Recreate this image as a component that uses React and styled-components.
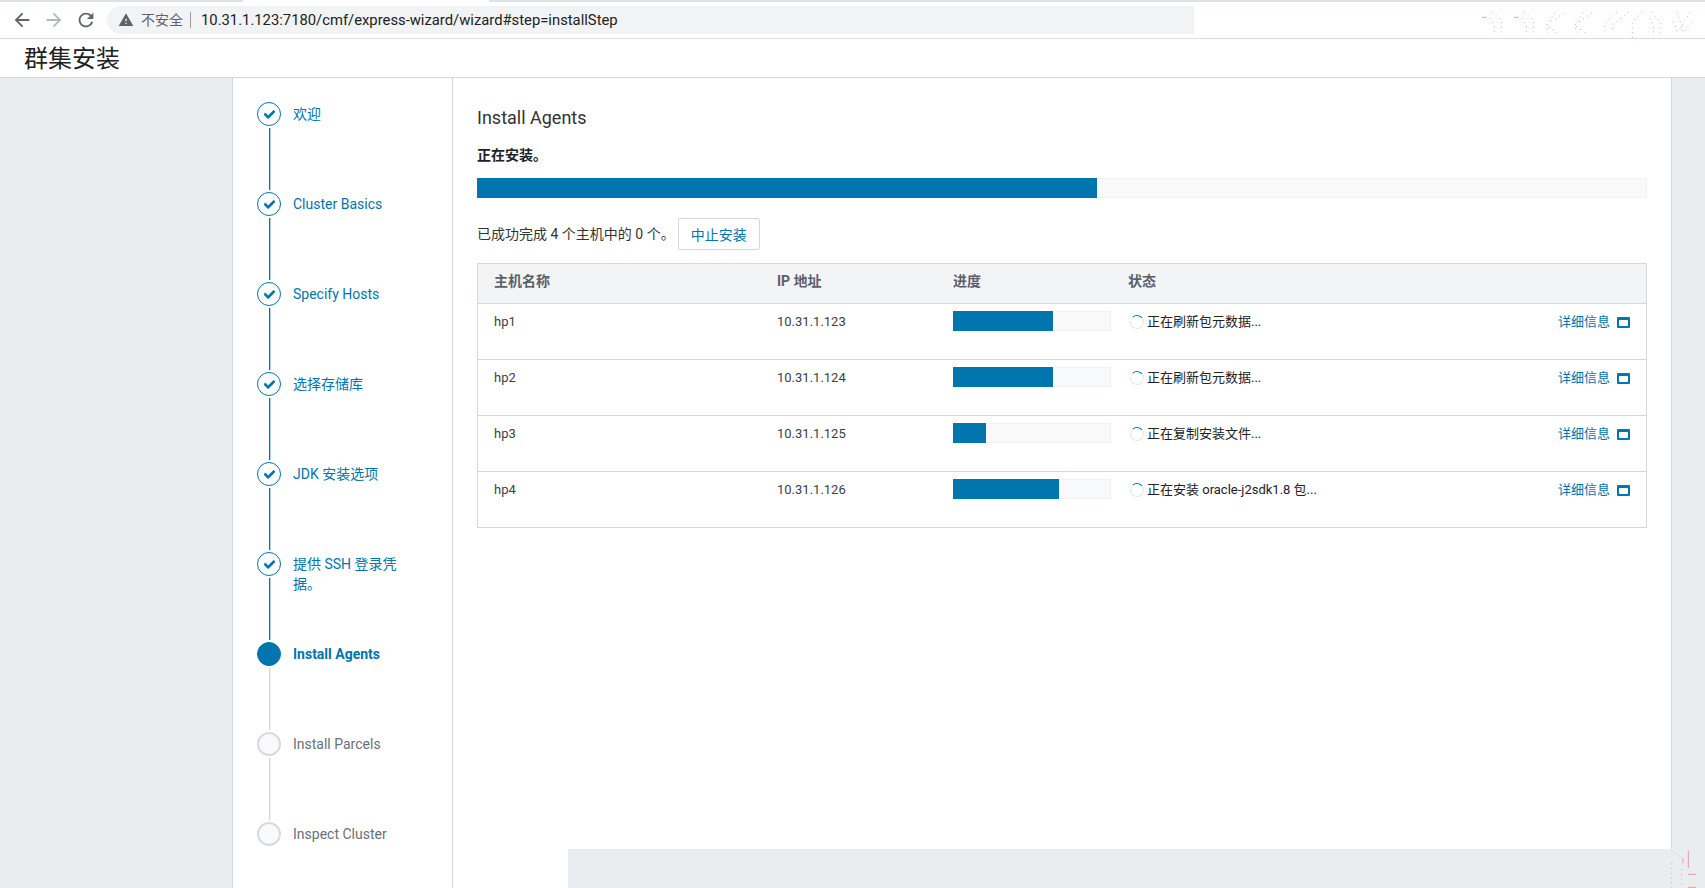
import { FaCheck } from "react-icons/fa";
import styled, { createGlobalStyle } from "styled-components";

const BLUE = "#0075ae";
const FONT = `Roboto, "Noto Sans CJK SC", sans-serif`;

const GlobalStyle = createGlobalStyle`
  html, body {
    margin: 0;
    padding: 0;
    height: 100%;
    overflow: hidden;
  }
  body {
    font-family: ${FONT};
    font-size: 14px;
    color: #333;
    background: #eaedf0;
  }
`;

const Page = styled.div`
  position: relative;
  display: flex;
  flex-direction: column;
  height: 888px;
  overflow: hidden;
`;

/* browser chrome */
const TabStrip = styled.div`
  flex: none;
  height: 2px;
  background: linear-gradient(
    to right,
    #dee1e6 243px,
    #fff 243px,
    #fff 489px,
    #dee1e6 489px
  );
`;

const Toolbar = styled.div`
  flex: none;
  display: flex;
  align-items: center;
  height: 36px;
  padding: 0 511px 0 11px;
  background: #fff;
  border-bottom: 1px solid #dadce0;
`;

const NavButton = styled.svg`
  flex: none;
  width: 22px;
  height: 22px;
  margin-right: 10px;
  margin-top: -1px;
  fill: ${(props) => (props.$disabled ? "#b5b8bb" : "#5f6368")};
`;

const AddressBar = styled.div`
  flex: 1;
  display: flex;
  align-items: center;
  height: 28px;
  padding-left: 11px;
  background: #f1f3f4;
  border-radius: 14px 0 0 14px;
  white-space: nowrap;
`;

const WarnIcon = styled.svg`
  width: 16px;
  height: 16px;
  margin-right: 7px;
  fill: #5f6368;
`;

const Insecure = styled.span`
  color: #5f6368;
  font-size: 14px;
  padding-right: 7px;
  border-right: 1px solid #9aa0a6;
  line-height: 16px;
`;

const Url = styled.span`
  margin-left: 10px;
  font-size: 14.8px;
  color: #202124;
`;

const PageHeader = styled.header`
  flex: none;
  display: flex;
  align-items: center;
  height: 34px;
  padding: 0 0 4px 24px;
  background: #fff;
  border-bottom: 1px solid #d6d8da;
`;

const PageTitle = styled.h1`
  margin: 0;
  font-size: 24px;
  font-weight: 400;
  color: #222;
`;

const Body = styled.div`
  flex: 1;
  min-height: 0;
  display: flex;
  padding: 0 33px 0 232px;
`;

/* wizard steps */
const Sidebar = styled.nav`
  flex: none;
  box-sizing: border-box;
  width: 221px;
  padding: 24px 0 0 24px;
  background: #fff;
  border-left: 1px solid #d6d8da;
  border-right: 1px solid #d6d8da;
`;

const Step = styled.div`
  display: flex;
  height: 90px;
`;

const Marker = styled.div`
  flex: none;
  display: flex;
  flex-direction: column;
  align-items: center;
  width: 24px;
`;

const Circle = styled.div`
  flex: none;
  box-sizing: border-box;
  display: flex;
  align-items: center;
  justify-content: center;
  width: 24px;
  height: 24px;
  border-radius: 50%;
  color: ${BLUE};
  border: ${(props) =>
    props.$state === "pending" ? "2px solid #d8dadd" : `1.5px solid ${BLUE}`};
  background: ${(props) =>
    props.$state === "current"
      ? BLUE
      : props.$state === "pending"
        ? "#f8f9fb"
        : "#fff"};

  svg {
    stroke: currentColor;
    stroke-width: 30px;
  }
`;

const Connector = styled.div`
  flex: 1;
  width: 1px;
  margin: 2px 0;
  background: ${(props) => (props.$done ? BLUE : "#d3d5d8")};
  box-shadow: 1px 0 0 ${(props) => (props.$done ? "#0075ae55" : "#d3d5d855")};
`;

const StepLabel = styled.div`
  width: 112px;
  margin: 2px 0 0 12px;
  line-height: 20px;
  font-size: 14px;
  font-weight: ${(props) => (props.$state === "current" ? 700 : 400)};
  color: ${(props) => (props.$state === "pending" ? "#6a6f78" : BLUE)};
`;

/* main panel */
const Main = styled.main`
  flex: 1;
  min-width: 0;
  display: flex;
  flex-direction: column;
  background: #fff;
  border-right: 1px solid #d6d8da;
`;

const Content = styled.div`
  flex: 1;
  min-height: 0;
  padding: 28px 24px 0 24px;
`;

const Footer = styled.div`
  flex: none;
  height: 39px;
  margin-left: 115px;
  margin-right: -1px;
  background: #eaedf0;
`;

const Heading = styled.h2`
  margin: 0;
  font-size: 18px;
  font-weight: 400;
  line-height: 24px;
  color: #333;
`;

const Status = styled.div`
  margin-top: 15px;
  font-size: 14px;
  font-weight: 700;
  line-height: 20px;
  color: #222;
`;

const Track = styled.div`
  height: 20px;
  background: #f8f9fa;
  box-shadow: inset 0 0 0 1px #f1f2f4;
`;

const OverallTrack = styled(Track)`
  margin-top: 13px;
`;

const Fill = styled.div`
  height: 100%;
  background: ${BLUE};
`;

const SummaryRow = styled.div`
  display: flex;
  align-items: center;
  gap: 3px;
  margin-top: 20px;
  font-size: 14px;
`;

const SummaryText = styled.span`
  margin-top: -2px;
`;

const AbortButton = styled.button`
  box-sizing: border-box;
  width: 82px;
  height: 32px;
  padding: 0;
  background: #fff;
  border: 1px solid #d6d8da;
  border-radius: 2px;
  color: ${BLUE};
  font: inherit;
  cursor: pointer;
`;

const HostTable = styled.div`
  margin-top: 13px;
  border: 1px solid #d6d8da;
  border-bottom: 0;
`;

const Row = styled.div`
  display: grid;
  grid-template-columns: 283px 176px 175px 1fr;
  box-sizing: border-box;
  height: ${(props) => (props.$head ? "40px" : "56px")};
  border-bottom: 1px solid #d6d8da;
  background: ${(props) => (props.$head ? "#f3f4f6" : "#fff")};
  font-size: 13px;
`;

const HeadCell = styled.div`
  padding: 0 16px;
  line-height: 35px;
  font-size: 14px;
  font-weight: 700;
  color: #5b6068;
`;

const Cell = styled.div`
  padding: 8px 16px 0;
  line-height: 20px;
  color: #3a3f45;
`;

const BarCell = styled.div`
  padding: 7px 1px 0 16px;
`;

const StatusCell = styled(Cell)`
  display: flex;
  justify-content: space-between;
  padding-right: 16px;
  color: #222;
`;

const StatusText = styled.span`
  display: flex;
  align-items: center;
  height: 20px;
  gap: 3px;
  font-size: 13px;
`;

const Spinner = styled.span`
  flex: none;
  box-sizing: border-box;
  width: 14px;
  height: 14px;
  margin-left: 2px;
  border: 1.5px solid #e3e6ea;
  border-top-color: ${BLUE};
  border-radius: 50%;
  transform: rotate(5deg);
`;

const DetailsLink = styled.a`
  display: flex;
  align-items: center;
  gap: 7px;
  height: 20px;
  margin-left: -1px;
  color: ${BLUE};
  font-size: 13px;
  text-decoration: none;
  cursor: pointer;
`;

const WindowIcon = styled.span`
  box-sizing: border-box;
  width: 13px;
  height: 11px;
  border: 2px solid ${BLUE};
  border-top-width: 3px;
  border-radius: 1px;
`;

/* faint artefacts in the screen capture */
const Noise = styled.svg`
  position: absolute;
  pointer-events: none;
  fill: none;
  stroke: #e48f8f;
  stroke-width: 2.5;
  stroke-dasharray: 3 11;
  ${(props) => (props.$corner === "top" ? "top: 0;" : "bottom: 0;")}
  right: 0;
`;

const steps = [
  { label: "欢迎", state: "done" },
  { label: "Cluster Basics", state: "done" },
  { label: "Specify Hosts", state: "done" },
  { label: "选择存储库", state: "done" },
  { label: "JDK 安装选项", state: "done" },
  { label: "提供 SSH 登录凭据。", state: "done" },
  { label: "Install Agents", state: "current" },
  { label: "Install Parcels", state: "pending" },
  { label: "Inspect Cluster", state: "pending" },
];

const hosts = [
  { name: "hp1", ip: "10.31.1.123", progress: 63, status: "正在刷新包元数据..." },
  { name: "hp2", ip: "10.31.1.124", progress: 63, status: "正在刷新包元数据..." },
  { name: "hp3", ip: "10.31.1.125", progress: 21, status: "正在复制安装文件..." },
  { name: "hp4", ip: "10.31.1.126", progress: 67, status: "正在安装 oracle-j2sdk1.8 包..." },
];

const App = () => {
  return (
    <Page>
      <GlobalStyle />
      <TabStrip />
      <Toolbar>
        <NavButton viewBox="0 0 24 24">
          <path d="M20 11H7.83l5.59-5.59L12 4l-8 8 8 8 1.41-1.41L7.83 13H20v-2z" />
        </NavButton>
        <NavButton viewBox="0 0 24 24" $disabled>
          <path d="M12 4l-1.41 1.41L16.17 11H4v2h12.17l-5.58 5.59L12 20l8-8z" />
        </NavButton>
        <NavButton viewBox="0 0 24 24">
          <path d="M17.65 6.35A7.958 7.958 0 0 0 12 4c-4.42 0-7.99 3.58-7.99 8s3.57 8 7.99 8c3.73 0 6.84-2.55 7.73-6h-2.08A5.99 5.99 0 0 1 12 18c-3.31 0-6-2.69-6-6s2.69-6 6-6c1.66 0 3.14.69 4.22 1.78L13 11h7V4l-2.35 2.35z" />
        </NavButton>
        <AddressBar>
          <WarnIcon viewBox="0 0 24 24">
            <path d="M1 21h22L12 2 1 21zm12-3h-2v-2h2v2zm0-4h-2v-4h2v4z" />
          </WarnIcon>
          <Insecure>不安全</Insecure>
          <Url>10.31.1.123:7180/cmf/express-wizard/wizard#step=installStep</Url>
        </AddressBar>
      </Toolbar>
      <PageHeader>
        <PageTitle>群集安装</PageTitle>
      </PageHeader>
      <Body>
        <Sidebar>
          {steps.map((step, index) => (
            <Step key={step.label}>
              <Marker>
                <Circle $state={step.state}>
                  {step.state === "done" && <FaCheck size={11} />}
                </Circle>
                {index < steps.length - 1 && (
                  <Connector $done={step.state === "done"} />
                )}
              </Marker>
              <StepLabel $state={step.state}>{step.label}</StepLabel>
            </Step>
          ))}
        </Sidebar>
        <Main>
          <Content>
            <Heading>Install Agents</Heading>
            <Status>正在安装。</Status>
            <OverallTrack>
              <Fill style={{ width: "53%" }} />
            </OverallTrack>
            <SummaryRow>
              <SummaryText>已成功完成 4 个主机中的 0 个。</SummaryText>
              <AbortButton>中止安装</AbortButton>
            </SummaryRow>
            <HostTable>
              <Row $head>
                <HeadCell>主机名称</HeadCell>
                <HeadCell>IP 地址</HeadCell>
                <HeadCell>进度</HeadCell>
                <HeadCell>状态</HeadCell>
              </Row>
              {hosts.map((host) => (
                <Row key={host.name}>
                  <Cell>{host.name}</Cell>
                  <Cell>{host.ip}</Cell>
                  <BarCell>
                    <Track>
                      <Fill style={{ width: `${host.progress}%` }} />
                    </Track>
                  </BarCell>
                  <StatusCell>
                    <StatusText>
                      <Spinner />
                      {host.status}
                    </StatusText>
                    <DetailsLink>
                      详细信息
                      <WindowIcon />
                    </DetailsLink>
                  </StatusCell>
                </Row>
              ))}
            </HostTable>
          </Content>
          <Footer />
        </Main>
      </Body>
      <Noise $corner="top" width="405" height="120" viewBox="0 0 1215 360">
        <path d="M577 37L604 60V97M570 55L583 75V97M673 37L700 60V97M665 55L679 75V97" />
        <path d="M790 40L740 75L772 100M765 38L738 78L748 100M875 40L823 75L857 100M850 38L823 78L832 100" />
        <path d="M950 37L915 68V100M985 37L937 75V97M1025 37L997 68V115M1055 37L1082 70V100M1050 55L1060 75V100" />
        <path d="M1132 37L1150 98L1180 65M1170 37L1135 95M1120 65L1133 100" />
        <path d="M546 52H561M642 52H657" strokeDasharray="none" />
      </Noise>
      <Noise $corner="bottom" width="205" height="108" viewBox="0 0 615 324">
        <path d="M515 213L549 235M515 250V324M545 268V320" />
        <path d="M565 212V265M564 283H588M564 322H588M549 235V250" strokeDasharray="none" />
      </Noise>
    </Page>
  );
};

export default App;
